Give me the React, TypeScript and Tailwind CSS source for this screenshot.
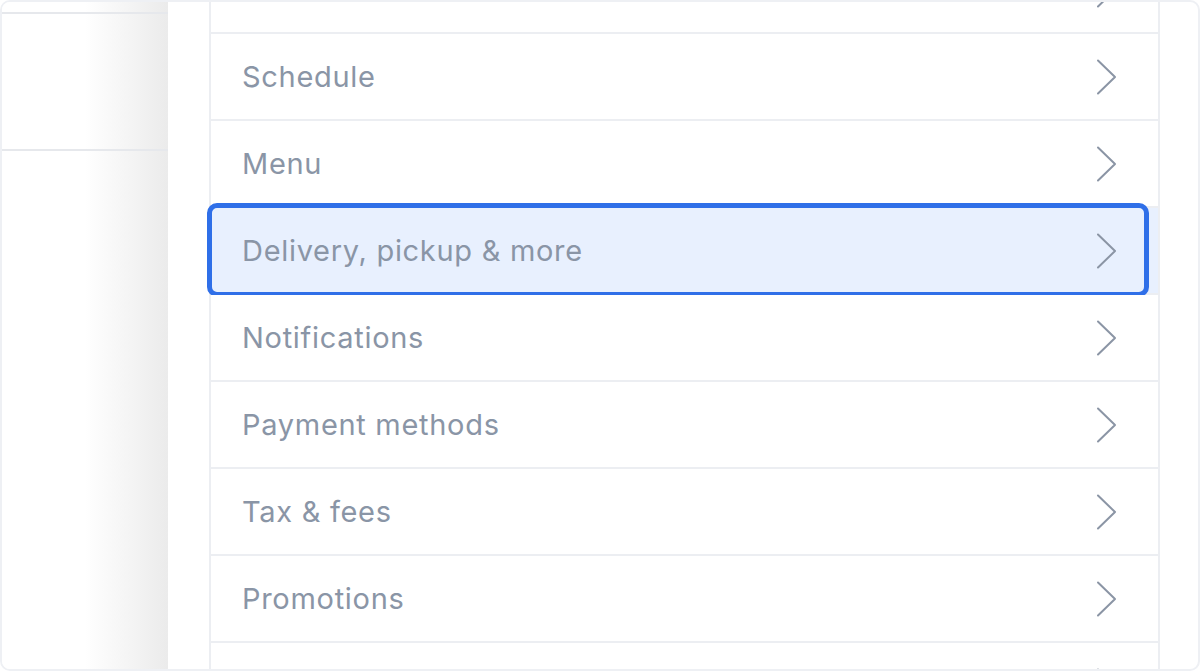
const items = [
  { label: '', partial: true },
  { label: 'Schedule' },
  { label: 'Menu' },
  { label: 'Delivery, pickup & more', active: true },
  { label: 'Notifications' },
  { label: 'Payment methods' },
  { label: 'Tax & fees' },
  { label: 'Promotions' },
  { label: '' },
];

function Chevron() {
  return (
    <svg width="22" height="36" viewBox="0 0 22 36" fill="none" className="shrink-0">
      <path d="M2 1.5 L19 18 L2 34.5" stroke="#8b95a5" strokeWidth="2" strokeLinecap="round" strokeLinejoin="round" />
    </svg>
  );
}

export default function App() {
  return (
    <div className="h-[671px] w-[1200px] overflow-hidden bg-white font-['Inter',sans-serif]">
      <div className="flex h-full w-full overflow-hidden rounded-[10px] border-2 border-[#eef0f4]">
        <div className="h-full w-[166px] shrink-0 bg-gradient-to-r from-white from-50% to-[#ebebeb]">
          <div className="h-[10px]" />
          <div className="h-[139px] border-y-2 border-[#e6e8ec]" />
        </div>

        {/* sheet */}
        <div className="flex h-full flex-1 pl-[41px] pr-[38px]">
          <div className="relative flex w-full flex-col border-x-2 border-[#eceef2]">
            <div className="-mt-[55px] flex flex-col">
              {items.map((item, i) => (
                <div
                  key={i}
                  className={
                    'relative flex h-[87px] shrink-0 items-center justify-between border-b-2 border-[#eceef2] pl-[31px] pr-[40px] ' +
                    (item.active ? 'bg-[#e8f0fe]' : 'bg-white')
                  }
                >
                  <span className="text-[29px] leading-none tracking-[0.7px] text-[#8a95a6]">{item.label}</span>
                  <Chevron />
                  {item.active && (
                    <div className="absolute -top-[5px] -bottom-[4px] -left-[4px] right-[9px] rounded-[10px] border-[5px] border-[#2f6fe8]" />
                  )}
                </div>
              ))}
            </div>
          </div>
        </div>
      </div>
    </div>
  );
}
